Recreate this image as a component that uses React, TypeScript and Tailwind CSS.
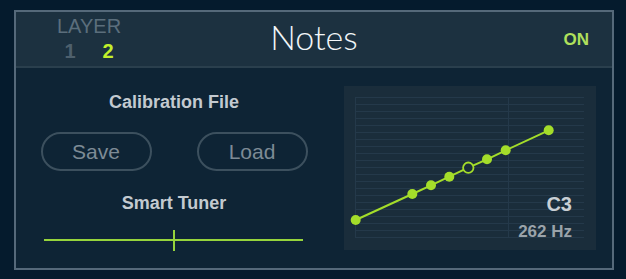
import React from "react";

const pts: [number, number][] = [
  [11.7, 134],
  [68.3, 108],
  [87, 99.3],
  [105.3, 90.7],
  [124.3, 81.7],
  [143, 73.3],
  [161.7, 64.3],
  [204.7, 44.3],
];

function Graph() {
  const hLines: number[] = [];
  for (let i = 0; i <= 20; i++) hLines.push(11 + i * 7);
  return (
    <div className="relative w-[252px] h-[164px] bg-[#1a2d3b]">
      <svg width="252" height="164" className="absolute inset-0">
        {hLines.map((y) => (
          <line key={y} x1="11" x2="240" y1={y + 0.5} y2={y + 0.5} stroke="#24394a" strokeWidth="1" />
        ))}
        <line x1="11.5" x2="11.5" y1="11" y2="152" stroke="#24394a" strokeWidth="1" />
        <line x1="164.5" x2="164.5" y1="11" y2="152" stroke="#24394a" strokeWidth="1" />
        <polyline
          points={pts.map((p) => p.join(",")).join(" ")}
          fill="none"
          stroke="#a4dd2a"
          strokeWidth="2"
        />
        {pts.map((p, i) =>
          i === 4 ? (
            <circle key={i} cx={p[0]} cy={p[1]} r="5.2" fill="#1a2d3b" stroke="#a4dd2a" strokeWidth="1.8" />
          ) : (
            <circle key={i} cx={p[0]} cy={p[1]} r="5" fill="#a4dd2a" />
          )
        )}
      </svg>
      <div className="absolute right-[24px] top-[108px] text-[20px] leading-[20px] font-bold text-[#c9cfd4] font-['Liberation_Sans',sans-serif]">
        C3
      </div>
      <div className="absolute right-[24px] top-[137px] text-[17px] leading-[17px] font-bold text-[#9aa3aa] font-['Liberation_Sans',sans-serif]">
        262 Hz
      </div>
    </div>
  );
}

export default function App() {
  return (
    <div className="w-[626px] h-[279px] bg-[#051b2d] pt-[10px] pl-[14px] font-['Liberation_Sans',sans-serif]">
      <div className="w-[600px] h-[260px] border-2 border-[#55697a] flex flex-col">
        <div className="h-[56px] bg-[#1c3140] border-b-2 border-[#2a3f4d] grid grid-cols-[1fr_auto_1fr] items-start">
          <div className="pl-[41px] pt-[4px] flex">
            <div className="flex flex-col items-center">
              <div className="text-[20px] leading-[20px] text-[#5b6e7c]">LAYER</div>
              <div className="flex gap-[27px] mt-[5px] text-[20px] leading-[20px] font-bold">
                <span className="w-[11px] text-center text-[#4e606d]">1</span>
                <span className="w-[11px] text-center text-[#c2ef2b]">2</span>
              </div>
            </div>
          </div>
          <div className="pt-[8px] text-[34px] leading-[34px] font-light text-[#f2f6f8] font-['Lato',sans-serif]">
            Notes
          </div>
          <div className="flex justify-end pr-[23px] pt-[19px]">
            <span className="text-[17px] leading-[17px] font-bold text-[#afe05c]">ON</span>
          </div>
        </div>
        <div className="flex-1 bg-[#0e2435] flex pl-0 pr-[16px] pt-[18px]">
          <div className="w-[316px] flex flex-col items-center pt-[5px]">
            <div className="text-[18px] leading-[22px] font-bold text-[#c3cad0]">Calibration File</div>
            <div className="flex gap-[45px] mt-[19px]">
              <button className="w-[111px] h-[39px] rounded-full border-2 border-[#3c505e] text-[21px] text-[#7d8b95]">
                Save
              </button>
              <button className="w-[111px] h-[39px] rounded-full border-2 border-[#3c505e] text-[21px] text-[#7d8b95]">
                Load
              </button>
            </div>
            <div className="text-[18px] leading-[22px] font-bold text-[#c3cad0] mt-[21px]">Smart Tuner</div>
            <div className="relative w-[259px] h-[21px] mt-[16px] ml-[-2px]">
              <div className="absolute left-0 right-0 top-[9px] h-[2px] bg-[#96d43c]" />
              <div className="absolute left-[129px] top-0 w-[2px] h-[21px] bg-[#96d43c]" />
            </div>
          </div>
          <div className="ml-[12px]">
            <Graph />
          </div>
        </div>
      </div>
    </div>
  );
}
